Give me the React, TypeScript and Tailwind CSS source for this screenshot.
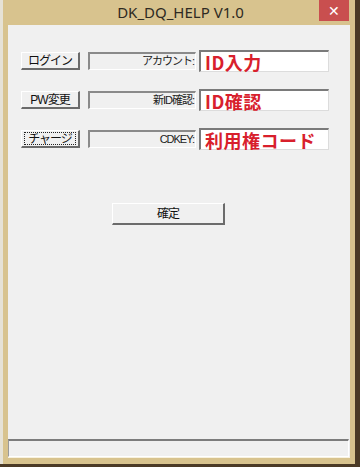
import React from "react";

const ui = { fontFamily: '"Liberation Sans","Noto Sans CJK JP",sans-serif' };
const red = { fontFamily: '"Noto Sans CJK JP",sans-serif' };

function Btn({ label, focus, className }: { label: string; focus?: boolean; className: string }) {
  return (
    <div
      className={`relative flex items-center justify-center whitespace-nowrap bg-[#f0f0f0] border-t border-l border-t-white border-l-white border-b-2 border-r-2 border-b-[#6b6b6b] border-r-[#6b6b6b] text-[12px] tracking-[-1px] text-[#111] ${className}`}
      style={ui}
    >
      {label}
      {focus && <span className="absolute inset-x-[2px] inset-y-[1px] border border-dotted border-[#222]" />}
    </div>
  );
}

function Row({ btn, label, value, focus }: { btn: string; label: string; value: string; focus?: boolean }) {
  return (
    <div className="flex items-center h-[22px]">
      <Btn label={btn} focus={focus} className="w-[59px] h-[18px] ml-[13px]" />
      <div
        className="ml-[8px] w-[108px] h-[18px] flex items-center justify-end pr-[1px] whitespace-nowrap bg-[#f0f0f0] border-t-2 border-l-2 border-t-[#8a8a8a] border-l-[#8a8a8a] border-b border-r border-b-white border-r-white text-[11px] tracking-[-1px] text-[#222]"
        style={ui}
      >
        {label}
      </div>
      <div className="ml-[3px] w-[130px] h-[22px] flex items-center bg-white border-t-2 border-l-2 border-t-[#7a7a7a] border-l-[#7a7a7a] border-b border-r border-b-[#dcdcdc] border-r-[#dcdcdc] pl-[4px]">
        <span className="text-[18px] font-bold text-[#d8202c] leading-none tracking-[0.5px]" style={red}>
          {value}
        </span>
      </div>
    </div>
  );
}

export default function App() {
  return (
    <div className="w-[360px] h-[467px] bg-[#4b3a26] overflow-hidden">
      <div className="w-[355px] h-[464px] bg-[#d8c38e] flex flex-col border-l-[3px] border-l-[#e6e2d6]">
        <div className="h-[25px] relative flex items-center justify-center">
          <span className="text-[15px] text-[#2e2a22] ml-[3px]" style={{ fontFamily: '"Noto Sans",sans-serif' }}>
            DK_DQ_HELP V1.0
          </span>
          <div className="absolute right-[6px] top-0 w-[30px] h-[21px] bg-[#c94f4f] flex items-center justify-center text-white text-[14px] leading-none">
            ✕
          </div>
        </div>
        <div className="ml-[5px] mr-[5px] mb-[6px] flex-1 bg-[#f0f0f0] flex flex-col border-b border-b-[#f7f1df]">
          <div className="pt-[25px] flex flex-col gap-[17px]">
            <Row btn="ログイン" label="アカウント:" value="ID入力" />
            <Row btn="PW変更" label="新ID確認:" value="ID確認" />
            <Row btn="チャージ" label="CDKEY:" value="利用権コード" focus />
          </div>
          <div className="mt-[53px] flex">
            <Btn label="確定" className="ml-[104px] w-[113px] h-[22px]" />
          </div>
          <div className="flex-1" />
          <div className="h-[18px] mr-[1px] bg-[#f0f0f0] border-t-2 border-l border-t-[#7c7c7c] border-l-[#9a9a9a] border-b border-r border-b-white border-r-white" />
        </div>
      </div>
    </div>
  );
}
